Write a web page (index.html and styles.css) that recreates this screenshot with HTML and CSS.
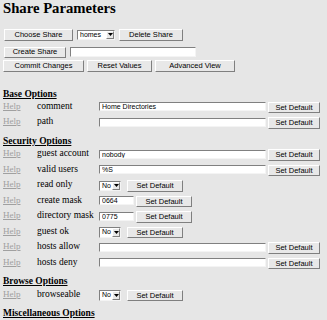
FILE: index.html
```html
<!DOCTYPE html>
<html>
<head>
<meta charset="utf-8">
<title>Share Parameters</title>
<link rel="stylesheet" href="styles.css">
</head>
<body>
<h1 class="title">Share Parameters</h1>

<div class="bar bar1">
  <button class="btn w-choose">Choose Share</button>
  <div class="select sel-homes"><span class="val">homes</span><span class="arrow"><svg width="5" height="3" viewBox="0 0 5 3"><path d="M0 0H5L2.5 3Z" fill="#000"/></svg></span></div>
  <button class="btn w-delete">Delete Share</button>
</div>
<div class="bar bar2">
  <button class="btn w-create">Create Share</button>
  <input class="txt w-newshare" type="text" value="">
</div>
<div class="bar bar3">
  <button class="btn w-commit">Commit Changes</button>
  <button class="btn w-reset">Reset Values</button>
  <button class="btn w-adv">Advanced View</button>
</div>

<h3 class="sec sec-first">Base Options</h3>
<div class="row"><a class="help">Help</a><span class="label">comment</span><input class="txt wide" type="text" value="Home Directories"><button class="btn def">Set Default</button></div>
<div class="row"><a class="help">Help</a><span class="label">path</span><input class="txt wide" type="text" value=""><button class="btn def">Set Default</button></div>

<h3 class="sec">Security Options</h3>
<div class="row"><a class="help">Help</a><span class="label">guest account</span><input class="txt wide" type="text" value="nobody"><button class="btn def">Set Default</button></div>
<div class="row"><a class="help">Help</a><span class="label">valid users</span><input class="txt wide" type="text" value="%S"><button class="btn def">Set Default</button></div>
<div class="row"><a class="help">Help</a><span class="label">read only</span><div class="select sel-no"><span class="val">No</span><span class="arrow"><svg width="5" height="3" viewBox="0 0 5 3"><path d="M0 0H5L2.5 3Z" fill="#000"/></svg></span></div><button class="btn def def-sel">Set Default</button></div>
<div class="row"><a class="help">Help</a><span class="label">create mask</span><input class="txt mask" type="text" value="0664"><button class="btn def def-mask">Set Default</button></div>
<div class="row"><a class="help">Help</a><span class="label">directory mask</span><input class="txt mask" type="text" value="0775"><button class="btn def def-mask">Set Default</button></div>
<div class="row"><a class="help">Help</a><span class="label">guest ok</span><div class="select sel-no"><span class="val">No</span><span class="arrow"><svg width="5" height="3" viewBox="0 0 5 3"><path d="M0 0H5L2.5 3Z" fill="#000"/></svg></span></div><button class="btn def def-sel">Set Default</button></div>
<div class="row"><a class="help">Help</a><span class="label">hosts allow</span><input class="txt wide" type="text" value=""><button class="btn def">Set Default</button></div>
<div class="row"><a class="help">Help</a><span class="label">hosts deny</span><input class="txt wide" type="text" value=""><button class="btn def">Set Default</button></div>

<h3 class="sec">Browse Options</h3>
<div class="row"><a class="help">Help</a><span class="label">browseable</span><div class="select sel-no"><span class="val">No</span><span class="arrow"><svg width="5" height="3" viewBox="0 0 5 3"><path d="M0 0H5L2.5 3Z" fill="#000"/></svg></span></div><button class="btn def def-sel">Set Default</button></div>

<h3 class="sec">Miscellaneous Options</h3>
</body>
</html>
```

FILE: styles.css
```css
html, body {
  margin: 0;
  padding: 0;
}
body {
  background: #e6e6e6;
  color: #000;
  font-family: "Liberation Serif", serif;
  padding-left: 3px;
  height: 320px;
  overflow: hidden;
}
.title {
  margin: 0;
  font: bold 14.7px/normal "Liberation Serif", serif;
  height: 29px;
}
.bar {
  display: flex;
  align-items: flex-start;
  gap: 3px;
}
.bar1 { height: 12px; margin-left: 1px; margin-bottom: 5.5px; gap: 4px; }
.bar2 { height: 11px; margin-left: 1px; margin-bottom: 2.5px; gap: 4px; }
.bar3 { height: 12px; }

.btn {
  box-sizing: border-box;
  height: 12px;
  padding: 0;
  margin: 0;
  font: 7.5px/1 "Liberation Sans", Arial, sans-serif;
  color: #000;
  background: #e8e8e8;
  border: 1px solid;
  border-color: #ffffff #7f7f7f #7f7f7f #ffffff;
  border-radius: 0;
}
.w-choose { width: 69px; }
.w-delete { width: 64px; }
.w-create { width: 62px; height: 11px; }
.w-commit { width: 81px; }
.w-reset { width: 65px; }
.w-adv { width: 80px; }

.txt {
  box-sizing: border-box;
  height: 9px;
  margin: 0;
  padding: 0 2px;
  font: 7px/1 "Liberation Sans", Arial, sans-serif;
  color: #000;
  background: #fff;
  border: 1px solid;
  border-color: #808080 #f4f4f4 #f4f4f4 #808080;
  border-radius: 0;
  outline: none;
}
.w-newshare { width: 126px; height: 10px; margin-top: 0.5px; }
.wide { width: 167px; margin-top: 0.5px; }
.mask { width: 35px; margin-top: 0.5px; }

.select {
  box-sizing: border-box;
  display: flex;
  align-items: stretch;
  height: 10.5px;
  background: #fff;
  border: 1px solid;
  border-color: #808080 #f4f4f4 #f4f4f4 #808080;
  font: 7px/8px "Liberation Sans", Arial, sans-serif;
}
.select .val {
  flex: 1;
  padding-left: 2px;
}
.select .arrow {
  box-sizing: border-box;
  width: 8px;
  display: flex;
  align-items: center;
  justify-content: center;
  background: #e8e8e8;
  border: 1px solid;
  border-color: #fff #7f7f7f #7f7f7f #fff;
}
.sel-homes { width: 38px; margin-top: 0.5px; }
.sel-no { width: 22px; margin-top: 0.5px; }

.sec {
  margin: 0;
  height: 16.5px;
  font: bold 9.5px/16px "Liberation Serif", serif;
  text-decoration: underline;
}
.sec-first { margin-top: 13.5px; height: 16px; }

.row {
  display: flex;
  align-items: flex-start;
  height: 15.5px;
}
.help {
  width: 33px;
  flex: none;
  color: #a0a0a0;
  text-decoration: underline;
  font-size: 9px;
  line-height: 9px;
}
.label {
  width: 62px;
  flex: none;
  padding-left: 1px;
  font-size: 9.5px;
  line-height: 9px;
  white-space: nowrap;
}
.def {
  width: 52px;
  height: 11.5px;
  margin-left: 2px;
}
.def-sel { margin-left: 6px; width: 56px; }
.def-mask { margin-left: 2px; width: 56px; }
```
